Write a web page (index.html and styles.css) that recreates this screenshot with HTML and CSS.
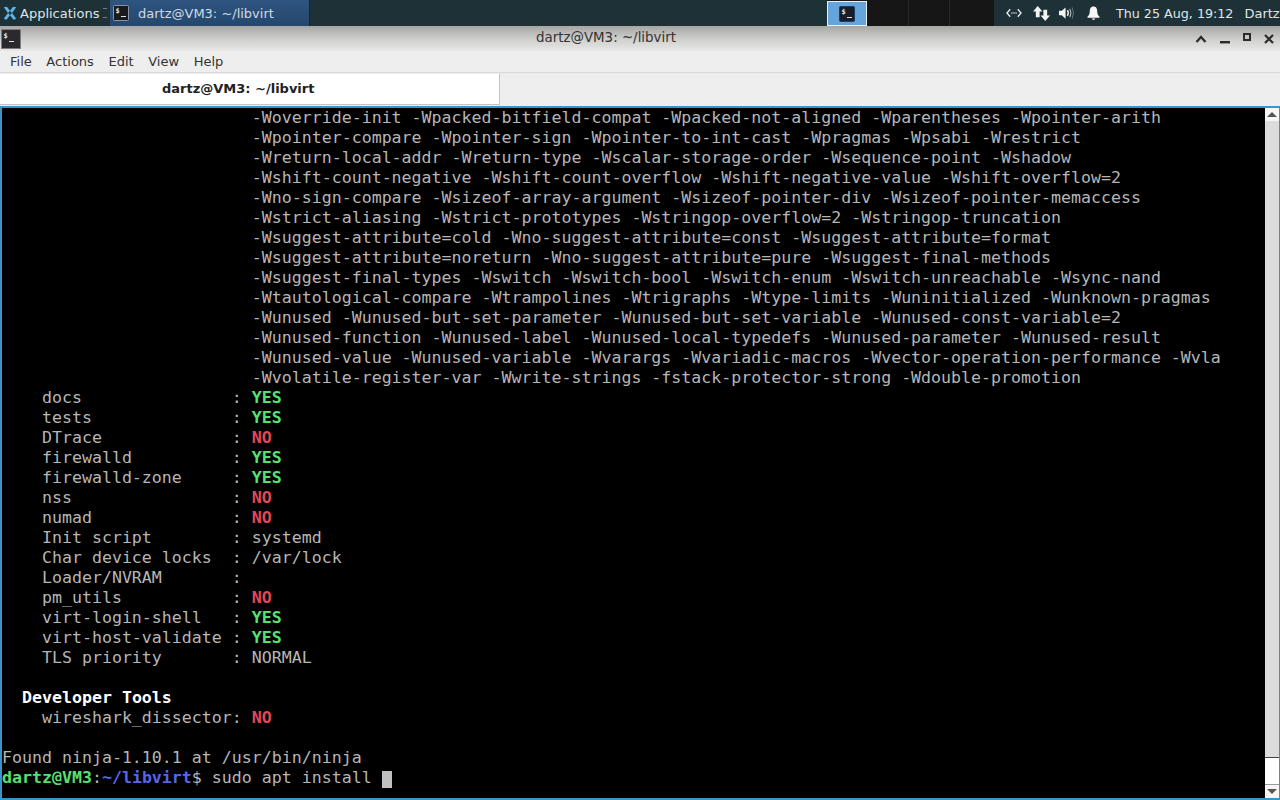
FILE: index.html
```html
<!DOCTYPE html>
<html lang="en">
<head>
<meta charset="utf-8">
<title>dartz@VM3: ~/libvirt</title>
<link rel="stylesheet" href="styles.css">
</head>
<body>
<header class="panel">
  <div class="apps">
    <svg class="xlogo" width="18" height="18" viewBox="0 0 18 18"><path d="M2 2.5 L5.5 2 L9 6.5 L12.5 2 L16 2.5 L11.3 9 L16 15.5 L13 16.5 L9 11.5 L5 16.5 L2 15.5 L6.7 9 Z" fill="#62b5e6"/><path d="M6.7 9 L9 6.5 L11.3 9 L9 11.5 Z" fill="#1f3c4e"/></svg>
    <span>Applications</span>
    <span class="sep"></span>
  </div>
  <div class="task">
    <svg class="termicon" width="16" height="16" viewBox="0 0 16 16"><rect x=".5" y=".5" width="15" height="15" rx="1" fill="#1a1a1e" stroke="#8a94a0"/><text x="2.5" y="7.5" class="dollar">$</text><path d="M8 11.5h5" stroke="#e0e0e0"/></svg>
    <span>dartz@VM3: ~/libvirt</span>
  </div>
  <div class="spacer"></div>
  <div class="pager">
    <div class="ws active"><svg width="16" height="16" viewBox="0 0 16 16"><rect x=".5" y=".5" width="15" height="15" rx="1" fill="#1a1d2a" stroke="#16406c"/><text x="2.5" y="7.5" class="dollar">$</text><path d="M8 11.5h5" stroke="#e0e0e0"/></svg></div>
    <div class="ws"></div><div class="ws"></div><div class="ws"></div>
  </div>
  <div class="tray">
    <svg class="net" width="16" height="10" viewBox="0 0 17 10"><path d="M4.5 1 L1 5 L4.5 9 M12.5 1 L16 5 L12.5 9" fill="none" stroke="#e8ecee" stroke-width="1.4"/><circle cx="6.3" cy="5" r=".8" fill="#e8ecee"/><circle cx="8.5" cy="5" r=".8" fill="#e8ecee"/><circle cx="10.7" cy="5" r=".8" fill="#e8ecee"/></svg>
    <svg class="updown" width="17" height="17" viewBox="0 0 18 18"><path d="M5 1 L10 7 H7 V13 H3 V7 H0 Z" fill="#f2f4f4"/><path d="M13 17 L18 11 H15 V5 H11 V11 H8 Z" fill="#f2f4f4"/></svg>
    <svg class="vol" width="15" height="14" viewBox="0 0 16 14"><path d="M0 4.5 H3 L7 1 V13 L3 9.5 H0 Z" fill="#f2f4f4"/><path d="M9 4 Q10.8 7 9 10" fill="none" stroke="#f2f4f4" stroke-width="1.5"/><path d="M11.5 2.5 Q14 7 11.5 11.5" fill="none" stroke="#d0d6d8" stroke-width="1"/><path d="M14 1 Q17 7 14 13" fill="none" stroke="#6a7a80" stroke-width="1"/></svg>
    <svg class="bell" width="13" height="16" viewBox="0 0 14 16"><path d="M7 1 C10 1 11 3.5 11 6 C11 9 12 10.5 13.5 12 V13 H.5 V12 C2 10.5 3 9 3 6 C3 3.5 4 1 7 1 Z" fill="#f6f8f8"/><path d="M5 14 H9 Q8.6 15.5 7 15.5 Q5.4 15.5 5 14 Z" fill="#f6f8f8"/></svg>
    <span class="clock">Thu 25 Aug, 19:12</span>
    <span class="user">Dartz</span>
  </div>
</header>

<section class="window">
  <div class="titlebar">
    <svg class="winicon" width="20" height="20" viewBox="0 0 20 20"><rect x=".5" y=".5" width="19" height="19" fill="#2a2a2c" stroke="#7c7c7c"/><text x="2.5" y="9" class="dollar">$</text><path d="M8 12.5h5" stroke="#e0e0e0"/></svg>
    <div class="wintitle">dartz@VM3: ~/libvirt</div>
    <div class="winbtns">
      <svg width="12" height="8" viewBox="0 0 12 8"><path d="M1.5 7 L6 2 L10.5 7" fill="none" stroke="#2b2b2b" stroke-width="2.2"/></svg>
      <svg width="10" height="3" viewBox="0 0 10 3"><rect width="10" height="2.4" fill="#2b2b2b"/></svg>
      <svg width="8" height="8" viewBox="0 0 8 8"><rect x="1" y="1" width="6" height="6" fill="none" stroke="#2b2b2b" stroke-width="2"/></svg>
      <svg width="10" height="10" viewBox="0 0 10 10"><path d="M1 1 L9 9 M9 1 L1 9" stroke="#2b2b2b" stroke-width="2.2"/></svg>
    </div>
  </div>
  <nav class="menubar">
    <span>File</span><span>Actions</span><span>Edit</span><span>View</span><span>Help</span>
  </nav>
  <div class="tabbar">
    <div class="tab">dartz@VM3: ~/libvirt</div>
  </div>
  <div class="termwrap">
    <pre class="term">                         -Woverride-init -Wpacked-bitfield-compat -Wpacked-not-aligned -Wparentheses -Wpointer-arith
                         -Wpointer-compare -Wpointer-sign -Wpointer-to-int-cast -Wpragmas -Wpsabi -Wrestrict
                         -Wreturn-local-addr -Wreturn-type -Wscalar-storage-order -Wsequence-point -Wshadow
                         -Wshift-count-negative -Wshift-count-overflow -Wshift-negative-value -Wshift-overflow=2
                         -Wno-sign-compare -Wsizeof-array-argument -Wsizeof-pointer-div -Wsizeof-pointer-memaccess
                         -Wstrict-aliasing -Wstrict-prototypes -Wstringop-overflow=2 -Wstringop-truncation
                         -Wsuggest-attribute=cold -Wno-suggest-attribute=const -Wsuggest-attribute=format
                         -Wsuggest-attribute=noreturn -Wno-suggest-attribute=pure -Wsuggest-final-methods
                         -Wsuggest-final-types -Wswitch -Wswitch-bool -Wswitch-enum -Wswitch-unreachable -Wsync-nand
                         -Wtautological-compare -Wtrampolines -Wtrigraphs -Wtype-limits -Wuninitialized -Wunknown-pragmas
                         -Wunused -Wunused-but-set-parameter -Wunused-but-set-variable -Wunused-const-variable=2
                         -Wunused-function -Wunused-label -Wunused-local-typedefs -Wunused-parameter -Wunused-result
                         -Wunused-value -Wunused-variable -Wvarargs -Wvariadic-macros -Wvector-operation-performance -Wvla
                         -Wvolatile-register-var -Wwrite-strings -fstack-protector-strong -Wdouble-promotion
    docs               : <b class="yes">YES</b>
    tests              : <b class="yes">YES</b>
    DTrace             : <b class="no">NO</b>
    firewalld          : <b class="yes">YES</b>
    firewalld-zone     : <b class="yes">YES</b>
    nss                : <b class="no">NO</b>
    numad              : <b class="no">NO</b>
    Init script        : systemd
    Char device locks  : /var/lock
    Loader/NVRAM       :
    pm_utils           : <b class="no">NO</b>
    virt-login-shell   : <b class="yes">YES</b>
    virt-host-validate : <b class="yes">YES</b>
    TLS priority       : NORMAL

  <b class="head">Developer Tools</b>
    wireshark_dissector: <b class="no">NO</b>

Found ninja-1.10.1 at /usr/bin/ninja
<b class="yes">dartz@VM3</b>:<b class="path">~/libvirt</b>$ sudo apt install <span class="cursor"> </span></pre>
    <div class="scrollbar">
      <div class="sbtn"><svg width="10" height="5" viewBox="0 0 10 5"><path d="M5 0 L10 5 H0 Z" fill="#555"/></svg></div>
      <div class="strack"></div>
      <div class="sgap"></div>
      <div class="sbtn"><svg width="10" height="5" viewBox="0 0 10 5"><path d="M5 5 L10 0 H0 Z" fill="#555"/></svg></div>
    </div>
  </div>
</section>
</body>
</html>
```

FILE: styles.css
```css
* { box-sizing: border-box; }
html, body { margin: 0; width: 1280px; height: 800px; overflow: hidden; background: #3c93c7; }
body { font-family: "DejaVu Sans", sans-serif; display: flex; flex-direction: column; }
svg { display: block; flex: none; }
.dollar { font: bold 7px "DejaVu Sans Mono", monospace; fill: #e8e8e8; }

.panel { height: 26px; flex: none; display: flex; align-items: center; background: #1e3137; color: #dfe6ea; font-size: 13px; box-shadow: inset 0 -1px 0 #233136; }
.apps { display: flex; align-items: center; width: 110px; height: 26px; padding-left: 2px; gap: 2px; background: #1e3137; }
.xlogo { width: 16px; height: 16px; }
.sep { width: 4px; height: 10px; margin-left: 2px; border-top: 1px solid #6d7c82; border-bottom: 1px solid #6d7c82; }
.task { width: 200px; height: 26px; padding-left: 3px; display: flex; align-items: center; gap: 9px; background: linear-gradient(#2d5580, #26476c); color: #cfdbe6; border-right: 1px solid #16253a; }
.spacer { flex: 1; }
.pager { display: flex; height: 26px; width: 167px; background: #161616; }
.ws { width: 40px; height: 26px; border-right: 1px solid #2a2a2a; }
.ws.active { width: 40px; height: 25px; margin-top: 1px; background: #66a5dc; border: 1px solid #eaf2f8; display: flex; align-items: center; justify-content: center; }
.ws:nth-child(2) { width: 42px; }
.ws:nth-child(3) { width: 41px; }
.ws:nth-child(4) { width: 44px; border-right: 0; }
.tray { width: 286px; height: 26px; display: flex; align-items: center; padding-left: 12px; overflow: hidden; }
.updown { margin-left: 11px; margin-top: 1px; }
.vol { margin-left: 9px; }
.bell { margin-left: 13px; margin-top: -1px; }
.clock { margin-left: 16px; white-space: nowrap; font-size: 12.7px; }
.user { margin-left: 11px; white-space: nowrap; }

.window { flex: 1; display: flex; flex-direction: column; background: #ededed; color: #2e2e2e; min-height: 0; }
.titlebar { height: 25px; flex: none; display: flex; align-items: center; position: relative; background: linear-gradient(#a6a6a4, #d0d0ce 55%, #e8e8e8); }
.winicon { margin: 0 0 0 1px; }
.wintitle { position: absolute; left: 26px; right: 94px; top: 4px; text-align: center; font-size: 13.4px; color: #333; }
.winbtns { margin-left: auto; display: flex; align-items: center; width: 95px; padding-left: 10px; gap: 13px; }
.winbtns svg:nth-child(2) { margin-top: 7px; }
.winbtns svg:nth-child(3) { margin-top: -4px; }
.menubar { height: 21px; flex: none; display: flex; align-items: center; gap: 14.6px; padding-left: 10px; font-size: 13px; color: #333; background: #eeeeee; }
.tabbar { height: 34px; flex: none; background: #eeeeee; border-top: 1px solid #d8d8d8; padding-top: 1px; }
.tab { width: 500px; height: 31px; padding-left: 162px; background: #fff; border-right: 1px solid #c4c4c4; border-bottom: 1px solid #c4c4c4; font-weight: bold; font-size: 13px; line-height: 30px; color: #222; }
.termwrap { flex: 1; min-height: 0; display: flex; background: #000; border: solid #3c93c7; border-width: 2px 1px 2px 2px; }
.term { flex: 1; margin: 0; padding: 0; font-family: "DejaVu Sans Mono", monospace; font-size: 16.6px; line-height: 20px; color: #b6b6b6; overflow: hidden; }
.term b { font-weight: bold; }
.yes { color: #55e16f; }
.no { color: #e2475a; }
.head { color: #fff; }
.path { color: #5865e8; }
.cursor { display: inline-block; width: 10px; height: 17px; vertical-align: -3px; background: #c0c0c0; }
.scrollbar { width: 14px; flex: none; display: flex; flex-direction: column; background: #fff; }
.sbtn { height: 13px; flex: none; display: flex; align-items: center; justify-content: center; background: #f6f6f6; }
.strack { flex: 1; background: #dcdcdc; border-bottom: 1px solid #444; }
.sgap { height: 27px; flex: none; background: #fff; border-bottom: 1px solid #999; }
```
